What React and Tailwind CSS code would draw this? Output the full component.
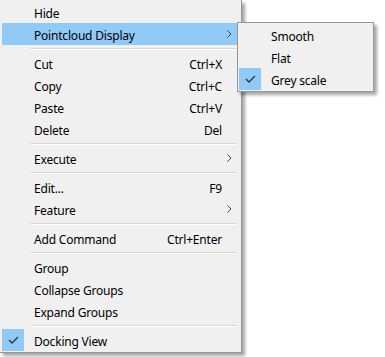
import React from 'react';

const mainItems = [
    { label: 'Hide' },
    { label: 'Pointcloud Display', sub: true, active: true },
    { sep: true },
    { label: 'Cut', key: 'Ctrl+X' },
    { label: 'Copy', key: 'Ctrl+C' },
    { label: 'Paste', key: 'Ctrl+V' },
    { label: 'Delete', key: 'Del' },
    { sep: true },
    { label: 'Execute', sub: true },
    { sep: true },
    { label: 'Edit...', key: 'F9' },
    { label: 'Feature', sub: true },
    { sep: true },
    { label: 'Add Command', key: 'Ctrl+Enter' },
    { sep: true },
    { label: 'Group' },
    { label: 'Collapse Groups' },
    { label: 'Expand Groups' },
    { sep: true },
    { label: 'Docking View', checked: true },
];

const subItems = [
    { label: 'Smooth' },
    { label: 'Flat' },
    { label: 'Grey scale', checked: true },
];

const Check = () => (
    <svg width="22" height="22" viewBox="0 0 22 22">
        <polyline points="7,11 10,14 16,8" fill="none" stroke="#333" strokeWidth="1.3" />
    </svg>
);

const Chevron = () => (
    <svg width="5" height="8" viewBox="0 0 5 8">
        <polyline points="0.5,0.5 4,4 0.5,7.5" fill="none" stroke="#444" strokeWidth="1" />
    </svg>
);

// Windows-style menu row
const MenuRow = ({ item }) => {
    if (item.sep) {
        return (
            <div className="h-[7px] pl-[28px] flex flex-col justify-center">
                <div className="h-px bg-[#d7d7d7]" />
                <div className="h-px bg-white" />
            </div>
        );
    }
    return (
        <div className={`h-[22px] flex items-center ${item.active ? 'bg-[#91c9f7]' : ''}`}>
            <div className={`w-[22px] h-[22px] shrink-0 ${item.checked ? 'bg-[#91c9f7]' : ''}`}>
                {item.checked && <Check />}
            </div>
            <span className="ml-[10px] flex-1 whitespace-nowrap pt-[3px]">{item.label}</span>
            {item.key && <span className="whitespace-nowrap pt-[3px]">{item.key}</span>}
            <div className="w-[15px] h-full flex items-center pl-[5px]">
                {item.sub && <Chevron />}
            </div>
        </div>
    );
};

export default function App() {
    return (
        <div
            className="relative w-[385px] h-[357px] bg-white overflow-hidden text-[12px] tracking-[-0.2px] text-black"
            style={{ fontFamily: '"Noto Sans", sans-serif' }}
        >
            <div className="w-[242px] bg-[#f0f0f0] border-r border-b border-[#979797] pt-px pb-px pl-[2px] pr-[4px] shadow-[3px_3px_3px_rgba(0,0,0,0.35)]">
                {mainItems.map((item, i) => (
                    <MenuRow key={i} item={item} />
                ))}
            </div>

            <div className="absolute left-[237px] top-[22px] w-[137px] bg-[#f0f0f0] border border-[#979797] p-px shadow-[3px_3px_3px_rgba(0,0,0,0.35)]">
                {subItems.map((item, i) => (
                    <MenuRow key={i} item={item} />
                ))}
            </div>
        </div>
    );
}
